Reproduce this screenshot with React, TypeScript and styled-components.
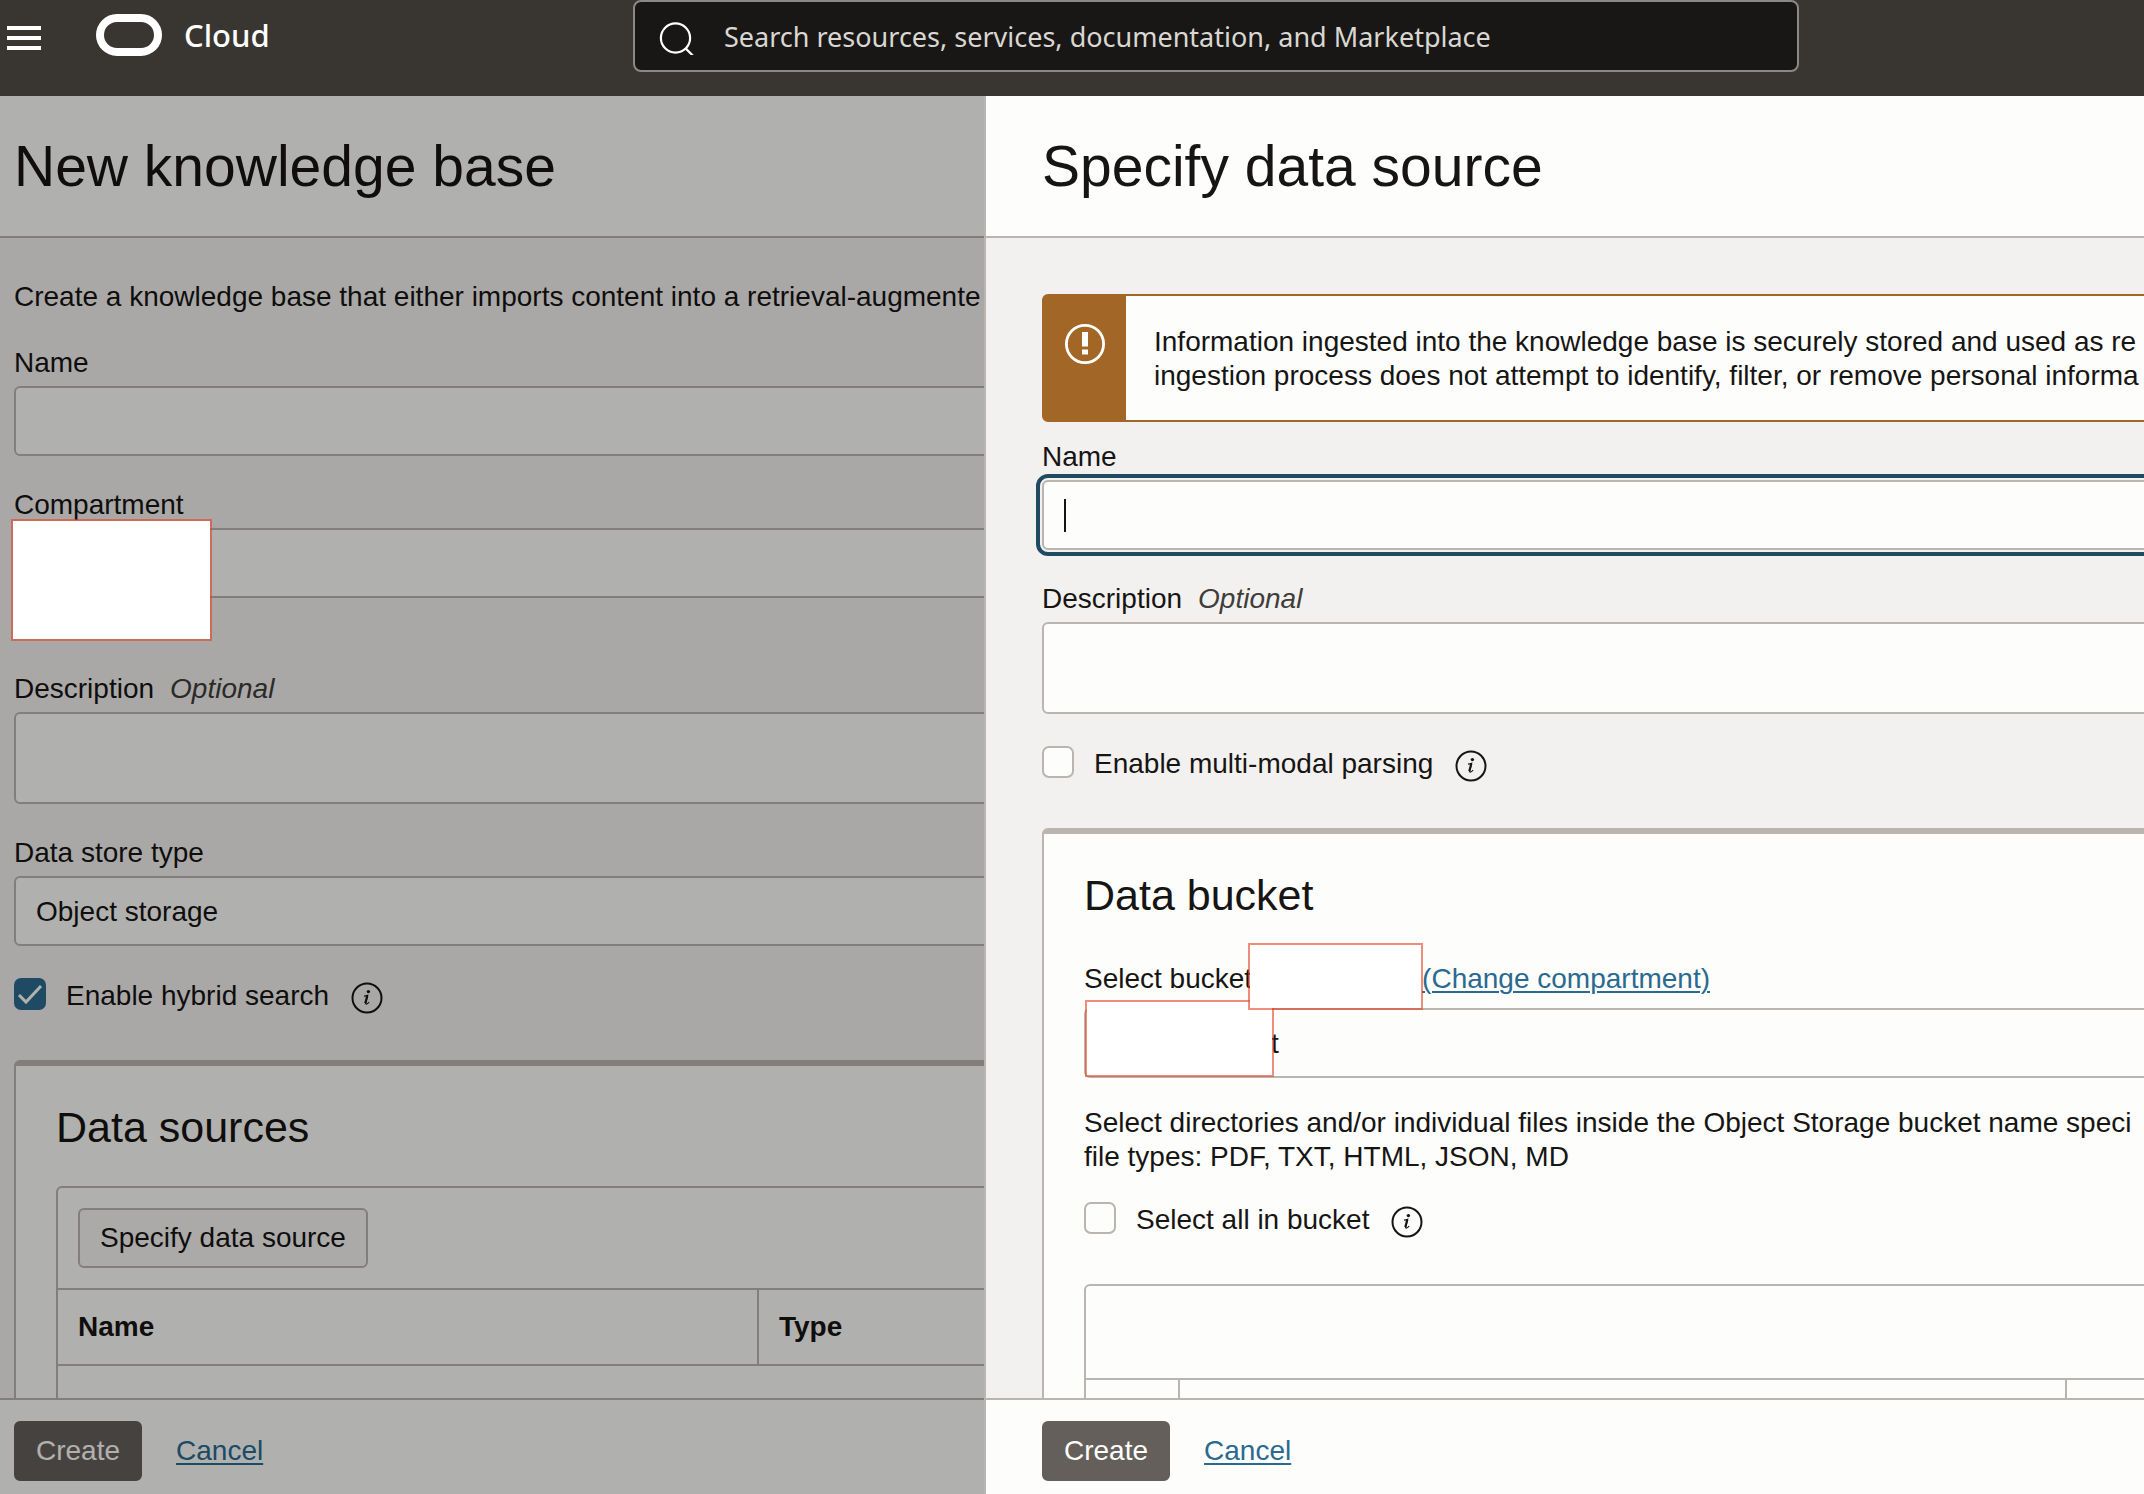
import React from 'react';
import styled, { createGlobalStyle, css } from 'styled-components';

const color = {
  ink: '#161513',
  muted: '#403d3a',
  line: '#bbb5b0',
  surface: '#fdfdfb',
  canvas: '#f3f1f0',
  link: '#2a6a91',
  focus: '#1f4a62',
  warning: '#a26627',
  bar: '#393530',
};

const GlobalStyle = createGlobalStyle`
  *, *::before, *::after { box-sizing: border-box; }
  body { margin: 0; overflow: hidden; }
  body, button, input, select, textarea {
    font-family: "Liberation Sans", Arial, Helvetica, sans-serif;
    font-size: 28px;
    color: ${color.ink};
  }
`;

const Shell = styled.div`
  display: flex;
  flex-direction: column;
  height: 100vh;
  background: ${color.canvas};
`;

/* Top bar */

const TopBar = styled.header`
  flex: none;
  display: grid;
  grid-template-columns: minmax(0, 633fr) minmax(0, 1166fr) minmax(0, 345fr);
  align-items: start;
  height: 96px;
  background: ${color.bar};
  font-family: "Noto Sans", sans-serif;
`;

const Brand = styled.div`
  display: flex;
  align-items: center;
  height: 70px;
  padding-left: 7px;
`;

const MenuButton = styled.button`
  display: flex;
  flex-direction: column;
  gap: 6px;
  width: 34px;
  margin: 6px 55px 0 0;
  padding: 0;
  border: 0;
  background: none;
`;

const MenuBar = styled.span`
  height: 4px;
  background: #fff;
`;

const BrandName = styled.span`
  margin-left: 22px;
  font-size: 31px;
  font-weight: 500;
  line-height: 40px;
  color: #fff;
`;

const SearchBox = styled.label`
  display: flex;
  align-items: center;
  gap: 28px;
  height: 72px;
  padding-left: 23px;
  border: 2px solid #8a8986;
  border-radius: 8px;
  background: #181715;
`;

const SearchInput = styled.input`
  flex: 1;
  min-width: 0;
  height: 40px;
  padding: 0;
  border: 0;
  outline: 0;
  background: none;
  font-family: "Noto Sans", sans-serif;
  font-size: 27px;
  color: #fff;
  &::placeholder { color: #dad7d3; opacity: 1; }
`;

/* Panels: the drawer shares the grid row with the page and covers its right part */

const Stage = styled.div`
  flex: 1;
  min-height: 0;
  display: grid;
  grid-template-columns: minmax(0, 246fr) minmax(0, 290fr);
  grid-template-rows: minmax(0, 1fr);
`;

const panel = css`
  grid-row: 1;
  display: flex;
  flex-direction: column;
  min-height: 0;
  overflow: hidden;
`;

const Page = styled.main`
  ${panel}
  grid-column: 1 / -1;
  position: relative;
  &::after {
    content: '';
    position: absolute;
    inset: 0;
    background: rgba(0, 0, 0, 0.3);
    pointer-events: none;
  }
`;

const Drawer = styled.section`
  ${panel}
  grid-column: 2;
  z-index: 1;
  border-left: 2px solid ${color.line};
  background: ${color.canvas};
`;

const PanelHeader = styled.div<{ $inset: number }>`
  flex: none;
  display: flex;
  align-items: center;
  height: 142px;
  padding: 0 ${(p) => p.$inset}px;
  border-bottom: 2px solid ${color.line};
  background: ${color.surface};
`;

const PanelTitle = styled.h1`
  margin: 0;
  font-size: 57px;
  font-weight: 400;
  line-height: 66px;
  white-space: nowrap;
`;

const PageBody = styled.div`
  flex: 1;
  min-height: 0;
  overflow: hidden;
  display: flex;
  flex-direction: column;
  gap: 32px;
  padding: 42px 14px 0;
  > * { flex: none; }
`;

const DrawerBody = styled(PageBody)`
  margin-right: -80px;
  padding: 56px 0 0 56px;
`;

const PanelFooter = styled.div<{ $inset: number }>`
  flex: none;
  display: flex;
  align-items: center;
  gap: 34px;
  padding: 21px ${(p) => p.$inset}px 13px;
  border-top: 2px solid ${color.line};
  background: ${color.surface};
`;

/* Text */

const Text = styled.p`
  margin: 0;
  line-height: 34px;
  white-space: nowrap;
`;

const Link = styled.a`
  color: ${color.link};
  line-height: 34px;
  white-space: nowrap;
  text-decoration: underline;
  text-decoration-thickness: 2px;
  text-underline-offset: 3px;
`;

/* Form parts */

const Stack = styled.div<{ $gap: number }>`
  display: flex;
  flex-direction: column;
  gap: ${(p) => p.$gap}px;
`;

const Field = styled.div`
  position: relative;
  display: flex;
  flex-direction: column;
  gap: 6px;
`;

const Label = styled.label`
  line-height: 34px;
  white-space: nowrap;
`;

const Optional = styled.em`
  margin-left: 16px;
  color: ${color.muted};
`;

const HelperRow = styled.div`
  height: 36px;
`;

const control = css`
  display: block;
  width: 100%;
  margin: 0;
  border: 2px solid ${color.line};
  border-radius: 6px;
  outline: 0;
  background: ${color.surface};
`;

const TextInput = styled.input<{ $focused?: boolean }>`
  ${control}
  height: 70px;
  padding: 0 20px;
  ${(p) =>
    p.$focused &&
    css`
      outline: 4px solid ${color.focus};
      outline-offset: 2px;
    `}
`;

const TextArea = styled.textarea`
  ${control}
  height: 92px;
  padding: 16px 20px;
  resize: none;
`;

const Select = styled.select<{ $indent?: number }>`
  ${control}
  appearance: none;
  height: 70px;
  padding: 0 20px 0 ${(p) => p.$indent ?? 20}px;
`;

const Caret = styled.span`
  position: absolute;
  left: 22px;
  bottom: 18px;
  width: 2px;
  height: 33px;
  background: ${color.ink};
`;

const Mask = styled.span<{ $x: number; $y: number; $w: number; $h: number }>`
  position: absolute;
  z-index: 1;
  left: ${(p) => p.$x}px;
  top: ${(p) => p.$y}px;
  width: ${(p) => p.$w}px;
  height: ${(p) => p.$h}px;
  border: 2px solid rgba(226, 66, 36, 0.6);
  background: #fff;
  background-clip: padding-box;
`;

const CheckRow = styled.div`
  display: flex;
  align-items: flex-start;
  height: 50px;
`;

const CheckLabel = styled.label`
  display: flex;
  gap: 20px;
  line-height: 36px;
  white-space: nowrap;
`;

const tick =
  "url(\"data:image/svg+xml,%3Csvg xmlns='http://www.w3.org/2000/svg' viewBox='0 0 32 32'%3E%3Cpath d='M5 17l7 7L27 8' fill='none' stroke='%23fdfdfb' stroke-width='3'/%3E%3C/svg%3E\")";

const CheckBox = styled.input`
  appearance: none;
  flex: none;
  width: 32px;
  height: 32px;
  margin: 0;
  border: 2px solid ${color.line};
  border-radius: 7px;
  background: ${color.surface};
  &:checked {
    border: 0;
    background: #2c6b8f ${tick} center / 32px 32px no-repeat;
  }
`;

const InfoButton = styled.button`
  width: 32px;
  height: 32px;
  margin: 4px 0 0 22px;
  padding: 0;
  border: 0;
  background: none;
  svg { display: block; }
`;

const BaseButton = styled.button`
  height: 60px;
  padding: 0 20px;
  border: 2px solid transparent;
  border-radius: 6px;
  white-space: nowrap;
`;

const PrimaryButton = styled(BaseButton)`
  background: #655f5b;
  border-color: #655f5b;
  color: ${color.surface};
`;

const OutlineButton = styled(BaseButton)`
  background: #f5f4f2;
  border-color: ${color.line};
`;

/* Alert */

const Alert = styled.div`
  display: flex;
  border: 2px solid ${color.warning};
  border-radius: 6px;
  background: ${color.surface};
`;

const AlertIcon = styled.div`
  flex: none;
  width: 82px;
  padding: 28px 0 0 21px;
  background: ${color.warning};
  svg { display: block; }
`;

const AlertText = styled(Text)`
  padding: 29px 28px 27px;
`;

/* Cards and tables */

const Card = styled.section`
  display: flex;
  flex-direction: column;
  gap: 32px;
  padding: 34px 40px;
  border: 2px solid ${color.line};
  border-top-width: 6px;
  border-radius: 6px;
  background: ${color.surface};
`;

const CardTitle = styled.h2`
  margin: 0;
  font-size: 43px;
  font-weight: 400;
  line-height: 54px;
`;

const BucketRow = styled.div`
  position: relative;
  display: flex;
  align-items: center;
  gap: 170px;
  height: 50px;
  z-index: 2;
`;

const TableFrame = styled.div`
  border: 2px solid ${color.line};
  border-radius: 6px;
`;

const Toolbar = styled.div`
  min-height: 94px;
  padding: 20px;
  border-bottom: 2px solid ${color.line};
`;

const Table = styled.table`
  width: 100%;
  table-layout: fixed;
  border-collapse: separate;
  border-spacing: 0;
`;

const Th = styled.th<{ $width?: number }>`
  width: ${(p) => (p.$width ? `${p.$width}px` : 'auto')};
  height: 76px;
  padding: 0 20px;
  border-right: 2px solid ${color.line};
  border-bottom: 2px solid ${color.line};
  text-align: left;
  font-weight: 700;
  &:last-child { border-right: 0; }
`;

const Td = styled.td`
  height: 76px;
`;

const InfoIcon = () => (
  <svg width="32" height="32" viewBox="0 0 32 32" fill="none" stroke={color.ink}>
    <circle cx="16" cy="16" r="14.5" strokeWidth="2" />
    <circle cx="17.4" cy="9.6" r="1.7" fill={color.ink} stroke="none" />
    <path d="M13 14.2c1.4-.1 2.6-.4 3.6-.9l-1.9 7.3c-.3 1.2.2 1.7 1 1.4.9-.3 1.7-1.1 2.4-2" strokeWidth="1.2" />
    <path d="M16.3 13.8l-2 7.4" strokeWidth="2.2" />
  </svg>
);

const CheckOption = ({ id, label, checked }: { id: string; label: string; checked?: boolean }) => (
  <CheckRow>
    <CheckLabel htmlFor={id}>
      <CheckBox id={id} type="checkbox" defaultChecked={checked} />
      {label}
    </CheckLabel>
    <InfoButton type="button" aria-label={`About: ${label}`}>
      <InfoIcon />
    </InfoButton>
  </CheckRow>
);

const FormFooter = ({ inset }: { inset: number }) => (
  <PanelFooter $inset={inset}>
    <PrimaryButton type="button">Create</PrimaryButton>
    <Link href="#cancel">Cancel</Link>
  </PanelFooter>
);

export default function App() {
  return (
    <Shell>
      <GlobalStyle />
      <TopBar>
        <Brand>
          <MenuButton type="button" aria-label="Menu">
            <MenuBar />
            <MenuBar />
            <MenuBar />
          </MenuButton>
          <svg width="66" height="42" viewBox="0 0 66 42" aria-hidden="true">
            <rect x="4" y="4" width="58" height="34" rx="17" fill="none" stroke="#fff" strokeWidth="8" />
          </svg>
          <BrandName>Cloud</BrandName>
        </Brand>
        <SearchBox>
          <svg width="38" height="38" viewBox="0 0 38 38" fill="none" stroke="#fff" strokeWidth="2.2" aria-hidden="true">
            <circle cx="17.5" cy="21" r="14.6" />
            <path d="M27.6 31.4l7.6 7.6" />
          </svg>
          <SearchInput
            type="text"
            aria-label="Search"
            placeholder="Search resources, services, documentation, and Marketplace"
          />
        </SearchBox>
      </TopBar>

      <Stage>
        <Page>
          <PanelHeader $inset={14}>
            <PanelTitle>New knowledge base</PanelTitle>
          </PanelHeader>
          <PageBody>
            <Text>Create a knowledge base that either imports content into a retrieval-augmente</Text>
            <Field>
              <Label htmlFor="kb-name">Name</Label>
              <TextInput id="kb-name" type="text" />
            </Field>
            <Field>
              <Label htmlFor="kb-compartment">Compartment</Label>
              <Select id="kb-compartment" />
              <HelperRow />
              <Mask $x={-3} $y={31} $w={201} $h={122} />
            </Field>
            <Field>
              <Label htmlFor="kb-description">
                Description<Optional>Optional</Optional>
              </Label>
              <TextArea id="kb-description" />
            </Field>
            <Field>
              <Label htmlFor="kb-store">Data store type</Label>
              <Select id="kb-store">
                <option>Object storage</option>
              </Select>
            </Field>
            <CheckOption id="kb-hybrid" label="Enable hybrid search" checked />
            <Card>
              <CardTitle>Data sources</CardTitle>
              <TableFrame>
                <Toolbar>
                  <OutlineButton type="button">Specify data source</OutlineButton>
                </Toolbar>
                <Table>
                  <thead>
                    <tr>
                      <Th $width={701}>Name</Th>
                      <Th>Type</Th>
                    </tr>
                  </thead>
                  <tbody>
                    <tr>
                      <Td colSpan={2} />
                    </tr>
                  </tbody>
                </Table>
              </TableFrame>
            </Card>
          </PageBody>
          <FormFooter inset={14} />
        </Page>

        <Drawer>
          <PanelHeader $inset={56}>
            <PanelTitle>Specify data source</PanelTitle>
          </PanelHeader>
          <DrawerBody>
            <Stack $gap={18}>
              <Alert role="alert">
                <AlertIcon>
                  <svg width="40" height="40" viewBox="0 0 40 40" aria-hidden="true">
                    <circle cx="20" cy="20" r="18.6" fill="none" stroke="#fff" strokeWidth="2.8" />
                    <path d="M17 8h6v14.5h-6zM17 25.5h6v5h-6z" fill="#fff" />
                  </svg>
                </AlertIcon>
                <AlertText>
                  Information ingested into the knowledge base is securely stored and used as re
                  <br />
                  ingestion process does not attempt to identify, filter, or remove personal informa
                </AlertText>
              </Alert>
              <Field>
                <Label htmlFor="ds-name">Name</Label>
                <TextInput id="ds-name" type="text" $focused />
                <Caret />
              </Field>
            </Stack>
            <Field>
              <Label htmlFor="ds-description">
                Description<Optional>Optional</Optional>
              </Label>
              <TextArea id="ds-description" />
            </Field>
            <CheckOption id="ds-multimodal" label="Enable multi-modal parsing" />
            <Card>
              <CardTitle>Data bucket</CardTitle>
              <Stack $gap={28}>
                <Stack $gap={4}>
                  <BucketRow>
                    <Label htmlFor="ds-bucket">Select bucket</Label>
                    <Link href="#compartment">(Change compartment)</Link>
                    <Mask $x={164} $y={-11} $w={175} $h={67} />
                  </BucketRow>
                  <Field>
                    <Select id="ds-bucket" $indent={185}>
                      <option>t</option>
                    </Select>
                    <Mask $x={1} $y={-8} $w={189} $h={77} />
                  </Field>
                </Stack>
                <Text>
                  Select directories and/or individual files inside the Object Storage bucket name speci
                  <br />
                  file types: PDF, TXT, HTML, JSON, MD
                </Text>
                <CheckOption id="ds-all" label="Select all in bucket" />
              </Stack>
              <TableFrame>
                <Toolbar />
                <Table>
                  <thead>
                    <tr>
                      <Th $width={94} />
                      <Th $width={887} />
                      <Th />
                    </tr>
                  </thead>
                </Table>
              </TableFrame>
            </Card>
          </DrawerBody>
          <FormFooter inset={56} />
        </Drawer>
      </Stage>
    </Shell>
  );
}
